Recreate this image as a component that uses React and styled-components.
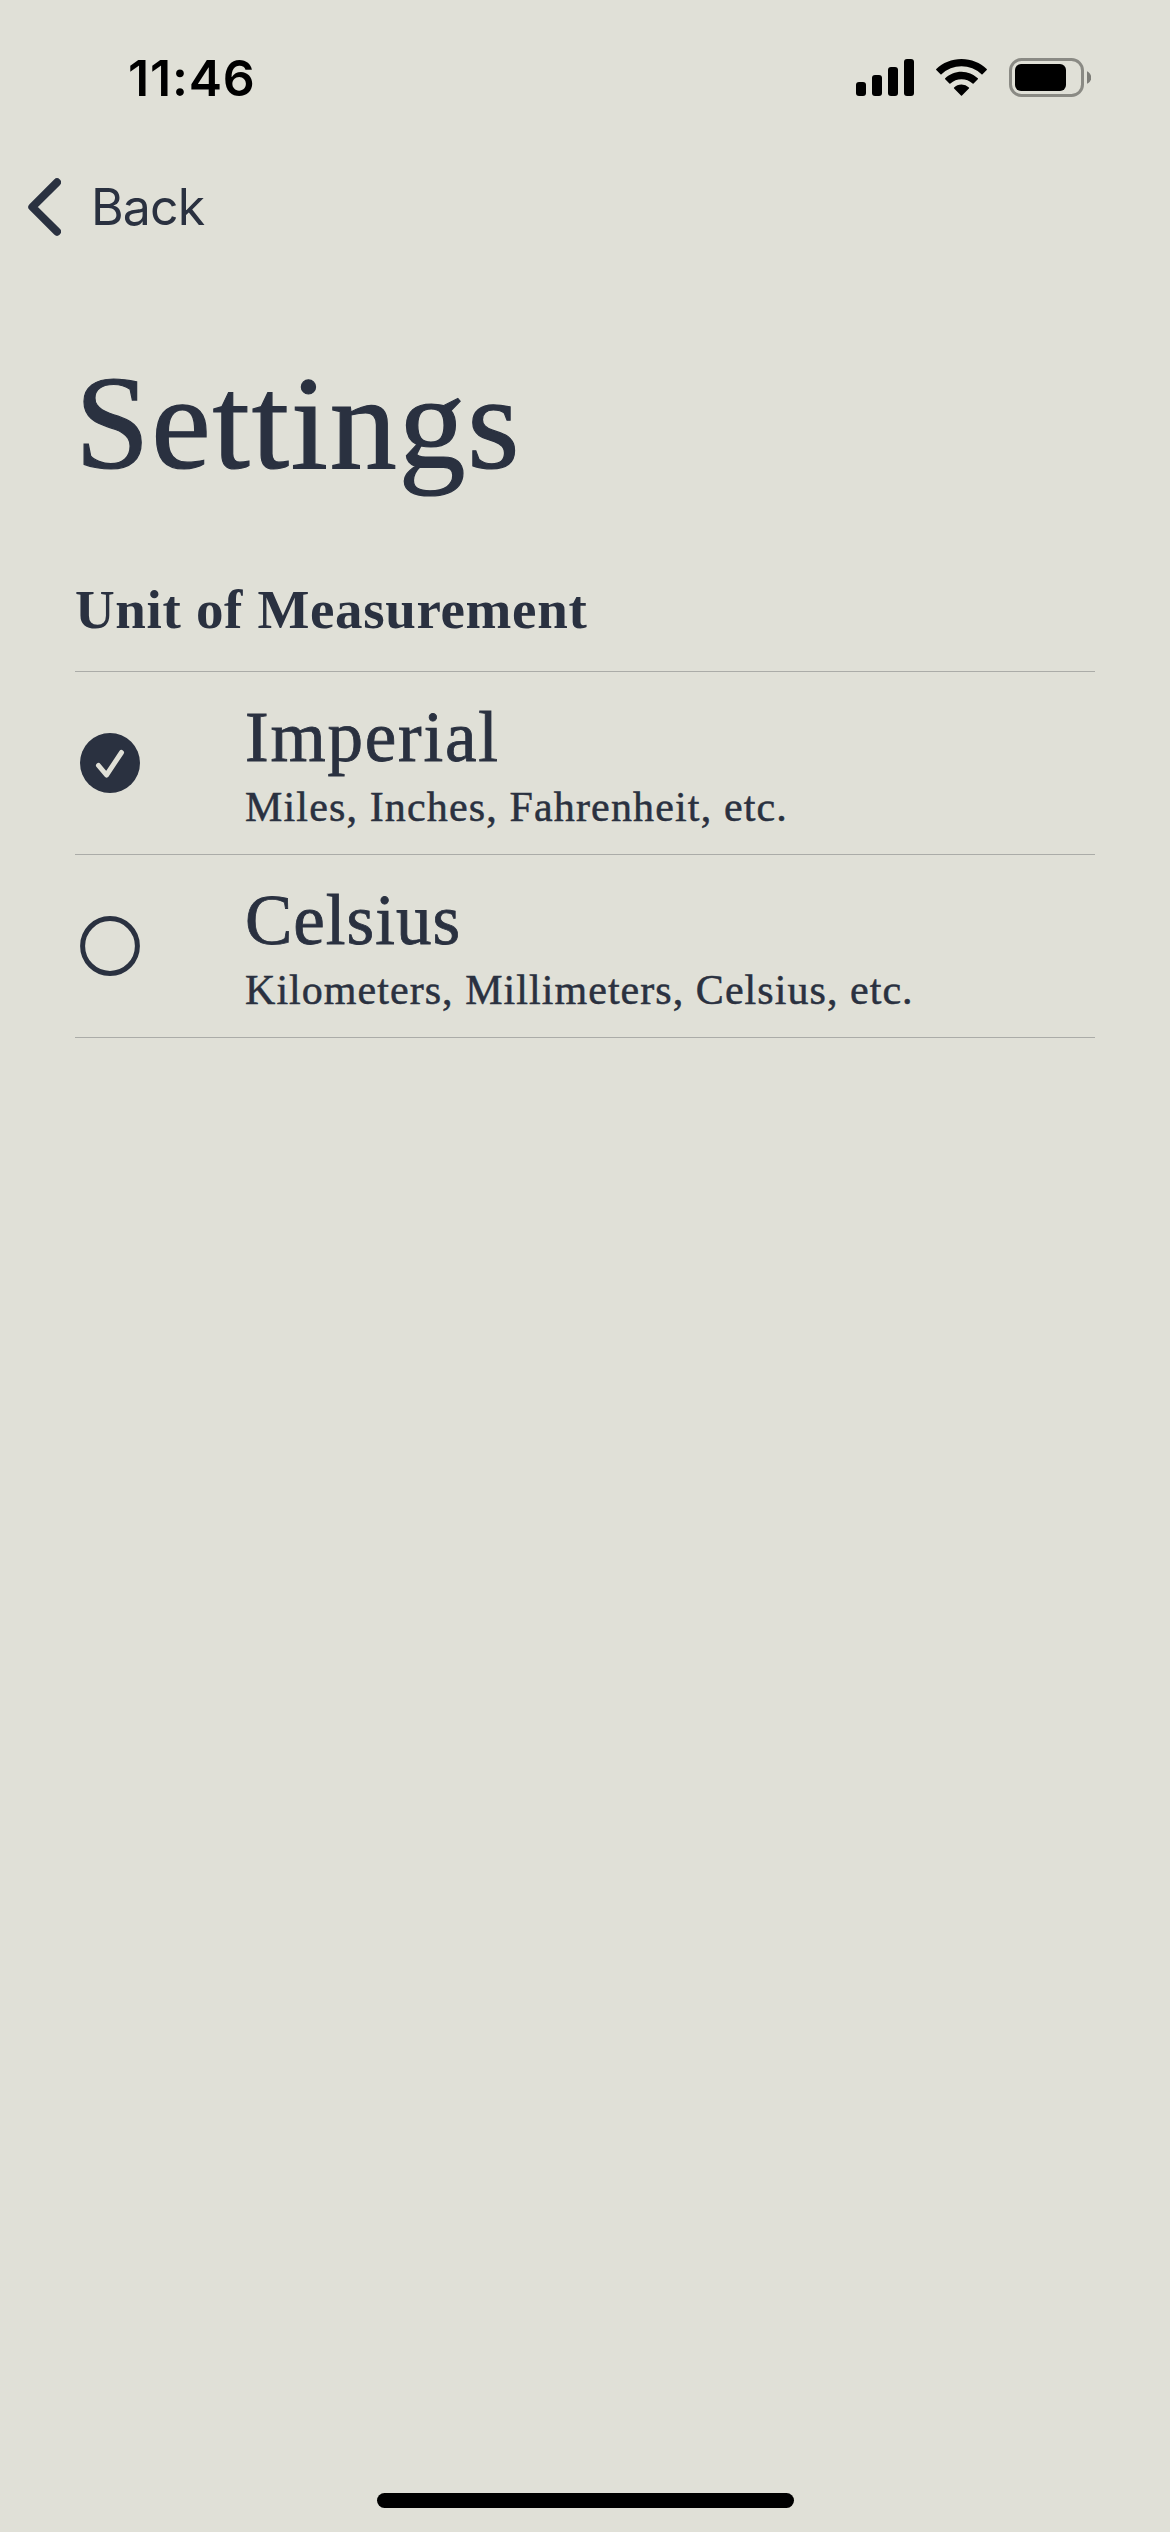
import React, { useState } from "react";
import styled, { createGlobalStyle } from "styled-components";

const color = { paper: "#e0e0d7", ink: "#2a3140", rule: "#abaca8", system: "#000" };
const serif = '"Liberation Serif", "Times New Roman", serif';
const sans = 'Inter, "Liberation Sans", sans-serif';

const GlobalStyle = createGlobalStyle`
  *, *::before, *::after { box-sizing: border-box; }
  body { margin: 0; background: ${color.paper}; }
`;

const Screen = styled.div`
  display: flex;
  flex-direction: column;
  width: 1170px;
  height: 2532px;
  overflow: hidden;
  background: ${color.paper};
  color: ${color.ink};
`;

const StatusBar = styled.header`
  display: flex;
  justify-content: space-between;
  align-items: flex-start;
  height: 141px;
  padding: 48px 79px 0 128px;
  color: ${color.system};
`;

const Clock = styled.time`
  font: 600 50px/60px ${sans};
  letter-spacing: 0.8px;
`;

const StatusIcons = styled.div`
  display: flex;
  align-items: flex-start;
  gap: 22px;
  padding-top: 10px;
  svg { display: block; }
`;

const BackButton = styled.button`
  display: flex;
  align-items: center;
  align-self: flex-start;
  gap: 30px;
  height: 132px;
  padding: 0 28px;
  border: 0;
  background: none;
  color: inherit;
  font: 400 50px/60px ${sans};
  letter-spacing: -0.9px;
  svg { display: block; }
`;

const Content = styled.main`
  display: flex;
  flex-direction: column;
  flex: 1;
  padding: 70px 75px 0;
  font-family: ${serif};
`;

const Title = styled.h1`
  margin: 0;
  font-size: 134px;
  font-weight: 400;
  line-height: 160px;
  letter-spacing: 1.8px;
  -webkit-text-stroke: 1.2px ${color.ink};
`;

const SectionTitle = styled.h2`
  margin: 0;
  padding: 75px 0 29px;
  font-size: 55px;
  font-weight: 700;
  line-height: 64px;
  letter-spacing: 0.65px;
`;

const OptionList = styled.div`
  display: flex;
  flex-direction: column;
  border-top: 1px solid ${color.rule};
`;

const Option = styled.button`
  display: flex;
  align-items: center;
  height: 183px;
  gap: 105px;
  padding: 0 5px;
  border: 0;
  border-bottom: 1px solid ${color.rule};
  background: none;
  color: inherit;
  font-family: inherit;
  text-align: left;
  svg { display: block; flex: none; }
`;

const OptionText = styled.span`
  display: flex;
  flex-direction: column;
  gap: 2px;
  padding-top: 3px;
  white-space: nowrap;
`;

const OptionName = styled.span`
  font-size: 71px;
  line-height: 82px;
  letter-spacing: ${(p) => p.$tracking}px;
  -webkit-text-stroke: 0.8px ${color.ink};
`;

const OptionDetail = styled.span`
  font-size: 42px;
  line-height: 54px;
  letter-spacing: ${(p) => p.$tracking}px;
  -webkit-text-stroke: 0.5px ${color.ink};
`;

const BottomBar = styled.footer`
  display: flex;
  justify-content: center;
  height: 39px;
`;

const HomeIndicator = styled.div`
  width: 417px;
  height: 15px;
  border-radius: 8px;
  background: ${color.system};
`;

const Signal = () => (
  <svg width="58" height="38" viewBox="0 0 58 38" fill="currentColor">
    <rect x="0" y="24" width="10" height="14" rx="3" />
    <rect x="16" y="17" width="10" height="21" rx="3" />
    <rect x="32" y="9" width="10" height="29" rx="3" />
    <rect x="48" y="1" width="10" height="37" rx="3" />
  </svg>
);

const Wifi = () => (
  <svg width="51" height="38" viewBox="0 0 51 38" fill="currentColor">
    <path d="M25.5 1C15.700 1 6.800 4.800.3 11q-.5.500 0 1l4.200 4.300q.5.500 1 0a29 29 0 0 1 40 0q.5.500 1 0l4.200-4.300q.5-.5 0-1C44.200 4.800 35.300 1 25.500 1z" />
    <path d="M25.500 13.700c-6.300 0-12 2.500-16.300 6.500q-.5.500 0 1l4.200 4.300q.5.500 1 0a16.300 16.300 0 0 1 22.200 0q.5.500 1 0l4.200-4.300q.5-.5 0-1a23.800 23.800 0 0 0-16.300-6.500z" />
    <path d="M25.500 26.500c-2.900 0-5.500 1.100-7.400 2.900q-.5.500 0 1l6.900 7.200q.5.500 1 0l6.900-7.200q.5-.5 0-1a10.700 10.700 0 0 0-7.400-2.900z" />
  </svg>
);

const Battery = () => (
  <svg width="82" height="40" viewBox="0 0 82 40">
    <rect x="1.500" y="1.500" width="72" height="36" rx="11" fill="none" stroke="#8a8a84" strokeWidth="3" />
    <rect x="6" y="6" width="51" height="27" rx="6" fill="currentColor" />
    <path d="M78 13.200c2.500 1.100 4.200 3.500 4.200 6.300s-1.700 5.200-4.200 6.300z" fill="#7d7d78" />
  </svg>
);

const Chevron = () => (
  <svg width="33" height="58" viewBox="0 0 33 58" fill="none" stroke="currentColor" strokeWidth="8" strokeLinecap="round" strokeLinejoin="round">
    <path d="M29 4.300 4.300 29 29 53.700" />
  </svg>
);

const Radio = ({ checked }) => (
  <svg width="60" height="60" viewBox="0 0 60 60" fill="none">
    {checked ? (
      <>
        <circle cx="30" cy="30" r="30" fill="currentColor" />
        <path d="M18.500 32.500 26.500 42 41.500 19.500" stroke={color.paper} strokeWidth="5" strokeLinecap="round" strokeLinejoin="round" />
      </>
    ) : (
      <circle cx="30" cy="30" r="27.400" stroke="currentColor" strokeWidth="5" />
    )}
  </svg>
);

const units = [
  { name: "Imperial", detail: "Miles, Inches, Fahrenheit, etc.", nameTracking: 1.8, detailTracking: 1.15 },
  { name: "Celsius", detail: "Kilometers, Millimeters, Celsius, etc.", nameTracking: 1, detailTracking: 1.05 },
];

export default function App() {
  const [selected, setSelected] = useState("Imperial");
  return (
    <Screen>
      <GlobalStyle />
      <StatusBar>
        <Clock>11:46</Clock>
        <StatusIcons>
          <Signal />
          <Wifi />
          <Battery />
        </StatusIcons>
      </StatusBar>
      <BackButton>
        <Chevron />
        Back
      </BackButton>
      <Content>
        <Title>Settings</Title>
        <SectionTitle>Unit of Measurement</SectionTitle>
        <OptionList role="radiogroup">
          {units.map((u) => (
            <Option key={u.name} role="radio" aria-checked={selected === u.name} onClick={() => setSelected(u.name)}>
              <Radio checked={selected === u.name} />
              <OptionText>
                <OptionName $tracking={u.nameTracking}>{u.name}</OptionName>
                <OptionDetail $tracking={u.detailTracking}>{u.detail}</OptionDetail>
              </OptionText>
            </Option>
          ))}
        </OptionList>
      </Content>
      <BottomBar>
        <HomeIndicator />
      </BottomBar>
    </Screen>
  );
}
